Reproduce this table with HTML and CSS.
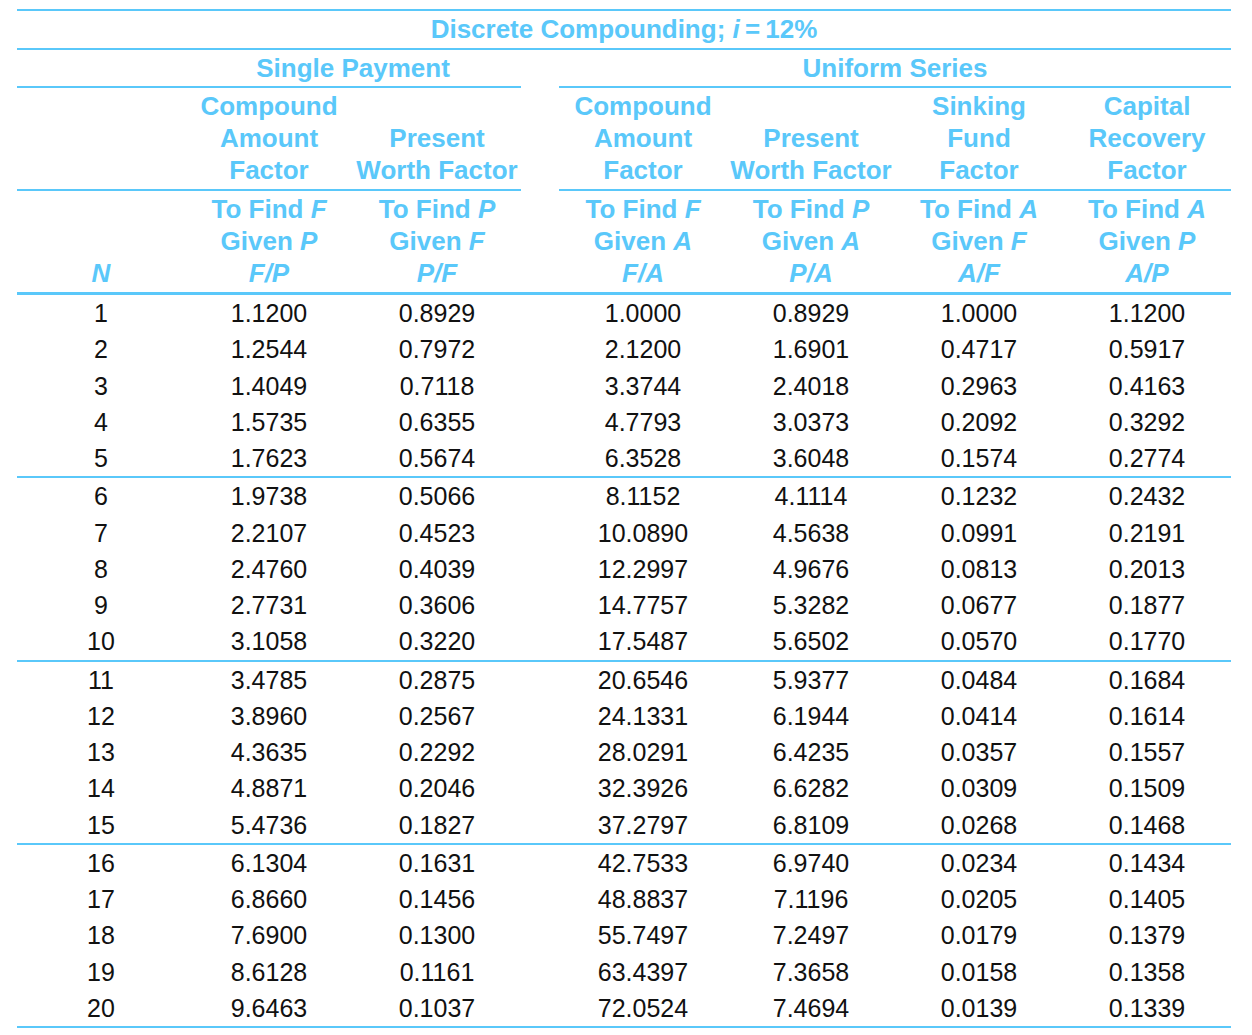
FILE: index.html
```html
<!DOCTYPE html>
<html lang="en">
<head>
<meta charset="utf-8">
<title>Discrete Compounding; i = 12%</title>
<link rel="stylesheet" href="styles.css">
</head>
<body>
<table class="factors">
  <colgroup>
    <col class="c-main"><col class="c-main"><col class="c-main">
    <col class="c-gap">
    <col class="c-main"><col class="c-main"><col class="c-main"><col class="c-main">
  </colgroup>
  <thead>
    <tr class="r-title">
      <th colspan="8">Discrete Compounding; <i>i</i>&#8201;=&#8201;12%</th>
    </tr>
    <tr class="r-group">
      <th class="ruled"></th>
      <th colspan="2" class="ruled">Single Payment</th>
      <th class="gap"></th>
      <th colspan="4" class="ruled">Uniform Series</th>
    </tr>
    <tr class="r-names">
      <th class="ruled"></th>
      <th class="ruled">Compound<br>Amount<br>Factor</th>
      <th class="ruled">Present<br>Worth Factor</th>
      <th class="gap"></th>
      <th class="ruled">Compound<br>Amount<br>Factor</th>
      <th class="ruled">Present<br>Worth Factor</th>
      <th class="ruled">Sinking<br>Fund<br>Factor</th>
      <th class="ruled">Capital<br>Recovery<br>Factor</th>
    </tr>
    <tr class="r-find">
      <th><i>N</i></th>
      <th>To Find <i>F</i><br>Given <i>P</i><br><i>F/P</i></th>
      <th>To Find <i>P</i><br>Given <i>F</i><br><i>P/F</i></th>
      <th></th>
      <th>To Find <i>F</i><br>Given <i>A</i><br><i>F/A</i></th>
      <th>To Find <i>P</i><br>Given <i>A</i><br><i>P/A</i></th>
      <th>To Find <i>A</i><br>Given <i>F</i><br><i>A/F</i></th>
      <th>To Find <i>A</i><br>Given <i>P</i><br><i>A/P</i></th>
    </tr>
  </thead>
  <tbody>
    <tr><td>1</td><td>1.1200</td><td>0.8929</td><td></td><td>1.0000</td><td>0.8929</td><td>1.0000</td><td>1.1200</td></tr>
    <tr><td>2</td><td>1.2544</td><td>0.7972</td><td></td><td>2.1200</td><td>1.6901</td><td>0.4717</td><td>0.5917</td></tr>
    <tr><td>3</td><td>1.4049</td><td>0.7118</td><td></td><td>3.3744</td><td>2.4018</td><td>0.2963</td><td>0.4163</td></tr>
    <tr><td>4</td><td>1.5735</td><td>0.6355</td><td></td><td>4.7793</td><td>3.0373</td><td>0.2092</td><td>0.3292</td></tr>
    <tr><td>5</td><td>1.7623</td><td>0.5674</td><td></td><td>6.3528</td><td>3.6048</td><td>0.1574</td><td>0.2774</td></tr>
  </tbody>
  <tbody>
    <tr><td>6</td><td>1.9738</td><td>0.5066</td><td></td><td>8.1152</td><td>4.1114</td><td>0.1232</td><td>0.2432</td></tr>
    <tr><td>7</td><td>2.2107</td><td>0.4523</td><td></td><td>10.0890</td><td>4.5638</td><td>0.0991</td><td>0.2191</td></tr>
    <tr><td>8</td><td>2.4760</td><td>0.4039</td><td></td><td>12.2997</td><td>4.9676</td><td>0.0813</td><td>0.2013</td></tr>
    <tr><td>9</td><td>2.7731</td><td>0.3606</td><td></td><td>14.7757</td><td>5.3282</td><td>0.0677</td><td>0.1877</td></tr>
    <tr><td>10</td><td>3.1058</td><td>0.3220</td><td></td><td>17.5487</td><td>5.6502</td><td>0.0570</td><td>0.1770</td></tr>
  </tbody>
  <tbody>
    <tr><td>11</td><td>3.4785</td><td>0.2875</td><td></td><td>20.6546</td><td>5.9377</td><td>0.0484</td><td>0.1684</td></tr>
    <tr><td>12</td><td>3.8960</td><td>0.2567</td><td></td><td>24.1331</td><td>6.1944</td><td>0.0414</td><td>0.1614</td></tr>
    <tr><td>13</td><td>4.3635</td><td>0.2292</td><td></td><td>28.0291</td><td>6.4235</td><td>0.0357</td><td>0.1557</td></tr>
    <tr><td>14</td><td>4.8871</td><td>0.2046</td><td></td><td>32.3926</td><td>6.6282</td><td>0.0309</td><td>0.1509</td></tr>
    <tr><td>15</td><td>5.4736</td><td>0.1827</td><td></td><td>37.2797</td><td>6.8109</td><td>0.0268</td><td>0.1468</td></tr>
  </tbody>
  <tbody>
    <tr><td>16</td><td>6.1304</td><td>0.1631</td><td></td><td>42.7533</td><td>6.9740</td><td>0.0234</td><td>0.1434</td></tr>
    <tr><td>17</td><td>6.8660</td><td>0.1456</td><td></td><td>48.8837</td><td>7.1196</td><td>0.0205</td><td>0.1405</td></tr>
    <tr><td>18</td><td>7.6900</td><td>0.1300</td><td></td><td>55.7497</td><td>7.2497</td><td>0.0179</td><td>0.1379</td></tr>
    <tr><td>19</td><td>8.6128</td><td>0.1161</td><td></td><td>63.4397</td><td>7.3658</td><td>0.0158</td><td>0.1358</td></tr>
    <tr><td>20</td><td>9.6463</td><td>0.1037</td><td></td><td>72.0524</td><td>7.4694</td><td>0.0139</td><td>0.1339</td></tr>
  </tbody>
</table>
</body>
</html>
```
FILE: styles.css
```css
html, body {
  margin: 0;
  padding: 0;
  background: #ffffff;
}

.factors {
  margin: 9px 0 0 17px;
  width: 1214px;
  table-layout: fixed;
  border-collapse: separate;
  border-spacing: 0;
  font-family: "Liberation Sans", Arial, Helvetica, sans-serif;
  color: #111111;
}

.c-main { width: 168px; }
.c-gap { width: 38px; }

.factors th {
  padding: 0;
  font-size: 26px;
  font-weight: bold;
  color: #5ac8fa;
  text-align: center;
  white-space: nowrap;
}

.r-title th {
  height: 37px;
  line-height: 37px;
  border-top: 2px solid #5ac8fa;
  border-bottom: 2px solid #5ac8fa;
}

.r-group th {
  height: 36px;
  line-height: 36px;
}

.r-group .ruled,
.r-names .ruled {
  border-bottom: 2px solid #5ac8fa;
}

.r-names th,
.r-find th {
  vertical-align: bottom;
  line-height: 32px;
  padding: 2px 0 3px;
}

.r-find th {
  border-bottom: 3px solid #5ac8fa;
}

.factors td {
  padding: 0;
  height: 36.25px;
  line-height: 36.25px;
  font-size: 25px;
  text-align: center;
  white-space: nowrap;
}

.factors tbody tr:last-child td {
  border-bottom: 2px solid #5ac8fa;
}
```
